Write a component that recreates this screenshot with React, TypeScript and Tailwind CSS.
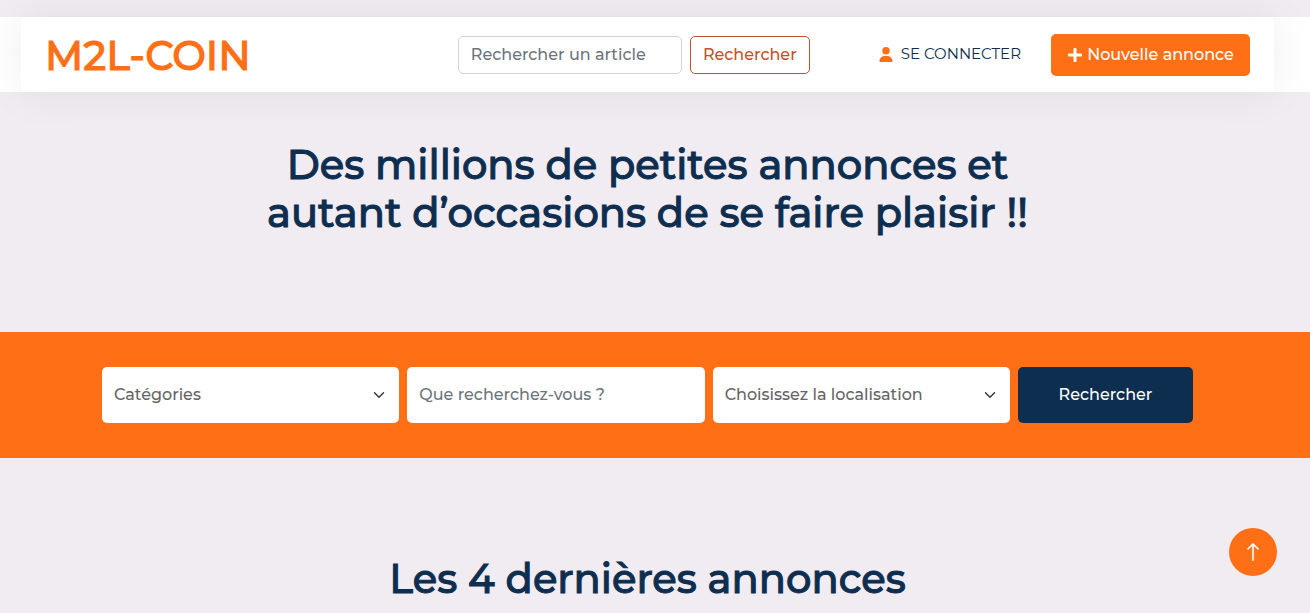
import React from 'react';
import { BsArrowUp } from 'react-icons/bs';
import { FaPlus } from 'react-icons/fa';
import { FaUser } from 'react-icons/fa6';

type FieldProps = { id: string; label: string; options: string[] };

function SelectField({ id, label, options }: FieldProps) {
  return (
    <div className="relative">
      <select
        id={id}
        aria-label={label}
        defaultValue=""
        className="h-14 w-full appearance-none rounded-[5px] bg-white pr-9 pl-3 text-base font-medium text-[#666565]"
      >
        <option value="">{label}</option>
        {options.map((option) => (
          <option key={option} value={option}>
            {option}
          </option>
        ))}
      </select>
      <svg
        viewBox="0 0 16 16"
        className="pointer-events-none absolute top-[22px] right-[14px] size-3 overflow-visible"
        fill="none"
        stroke="#343a40"
        strokeWidth="2"
        strokeLinecap="round"
        strokeLinejoin="round"
        aria-hidden="true"
      >
        <path d="m2 5 6 6 6-6" />
      </svg>
    </div>
  );
}

function Header() {
  return (
    <header className="bg-white pr-9 pl-[21px]">
      <nav className="flex min-h-[75px] flex-wrap items-center bg-white px-6 shadow-[0_0_45px_rgba(0,0,0,0.07)]">
        <a
          href="#"
          className="pt-0.5 text-[40px] leading-[48px] font-medium text-[#ff6f15] [-webkit-text-stroke:1px_currentColor]"
        >
          M2L-COIN
        </a>
        <form className="ml-auto flex gap-2" onSubmit={(event) => event.preventDefault()}>
          <input
            type="search"
            aria-label="Rechercher un article"
            placeholder="Rechercher un article"
            className="h-[38px] w-56 rounded-[5px] border border-[#ced4da] bg-white px-3 text-base font-medium text-[#212529] placeholder:text-[#6c757d]"
          />
          <button
            type="submit"
            className="h-[38px] w-[120px] rounded-[5px] border border-[#c0532b] text-base font-medium text-[#c0532b]"
          >
            Rechercher
          </button>
        </form>
        <a href="#connexion" className="ml-[69px] flex items-center gap-2 text-[15px] text-[#0e2e50]">
          <FaUser className="h-[15px] w-[14px] text-[#ff6f15]" aria-hidden="true" />
          SE CONNECTER
        </a>
        <a
          href="#nouvelle-annonce"
          className="ml-[30px] flex h-[42px] w-[199px] items-center justify-center gap-1 rounded-[5px] bg-[#ff6f15] text-base font-medium text-white"
        >
          <FaPlus className="size-4" aria-hidden="true" />
          Nouvelle annonce
        </a>
      </nav>
    </header>
  );
}

export default function App() {
  return (
    <div className="min-h-screen bg-[#f1ecf2] pt-[17px] font-[Montserrat,Inter,sans-serif]">
      <Header />
      <main>
        <section className="pt-[49px] pr-[15px] pb-[95px] text-center">
          <h1 className="text-[40px] leading-[48px] font-medium text-[#0e2e50] [-webkit-text-stroke:1px_currentColor]">
            Des millions de petites annonces et
            <br />
            autant d’occasions de se faire plaisir !!
          </h1>
        </section>

        <section className="bg-[#ff6f15] py-[35px] pr-[15px]">
          <form
            className="mx-auto grid max-w-[1091px] grid-cols-[1fr_1fr_1fr_175px] gap-2"
            onSubmit={(event) => event.preventDefault()}
          >
            <SelectField id="categorie" label="Catégories" options={['Véhicules', 'Immobilier', 'Multimédia']} />
            <input
              type="text"
              aria-label="Que recherchez-vous ?"
              placeholder="Que recherchez-vous ?"
              className="h-14 w-full rounded-[5px] bg-white px-3 pb-0.5 text-base font-medium text-[#212529] placeholder:text-[#6c757d]"
            />
            <SelectField
              id="localisation"
              label="Choisissez la localisation"
              options={['Paris', 'Lyon', 'Marseille']}
            />
            <button type="submit" className="h-14 rounded-[5px] bg-[#0e2e50] text-base font-medium text-white">
              Rechercher
            </button>
          </form>
        </section>

        <section className="pt-[97px] pr-[15px] text-center">
          <h2 className="text-[40px] leading-[48px] font-medium text-[#0e2e50] [-webkit-text-stroke:1px_currentColor]">
            Les 4 dernières annonces
          </h2>
        </section>
      </main>

      <a
        href="#"
        aria-label="Retour en haut"
        className="fixed right-[33px] bottom-[37px] flex size-12 items-center justify-center rounded-full bg-[#ff6f15] text-white"
      >
        <BsArrowUp className="size-5" strokeWidth="0.4" aria-hidden="true" />
      </a>
    </div>
  );
}
